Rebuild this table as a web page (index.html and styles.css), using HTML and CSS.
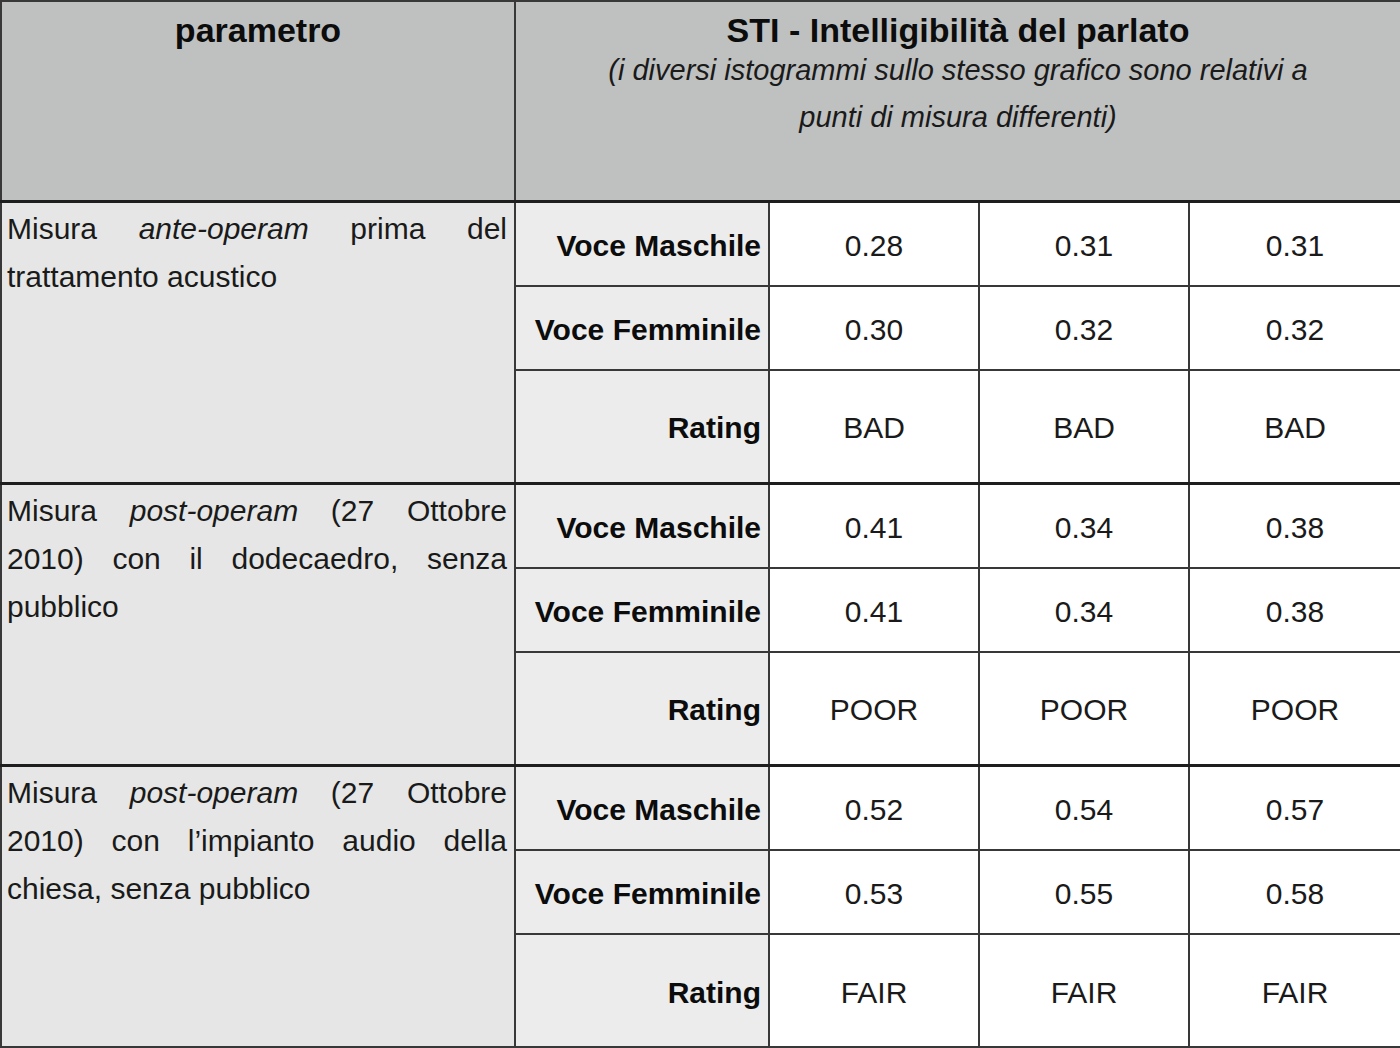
FILE: index.html
```html
<!DOCTYPE html>
<html lang="it">
<head>
<meta charset="utf-8">
<title>STI - Intelligibilità del parlato</title>
<link rel="stylesheet" href="styles.css">
</head>
<body>
<table class="sti">
  <colgroup>
    <col class="c-param">
    <col class="c-label">
    <col class="c-val">
    <col class="c-val">
    <col class="c-val-last">
  </colgroup>
  <thead>
    <tr class="head-row">
      <th class="h-param">parametro</th>
      <th class="h-sti" colspan="4">
        <div class="h-title">STI - Intelligibilità del parlato</div>
        <div class="h-sub">(i diversi istogrammi sullo stesso grafico sono relativi a<br>punti di misura differenti)</div>
      </th>
    </tr>
  </thead>
  <tbody class="group">
    <tr class="r-first">
      <td class="desc" rowspan="3">Misura <em>ante-operam</em> prima del trattamento acustico</td>
      <th class="label">Voce Maschile</th>
      <td class="val">0.28</td><td class="val">0.31</td><td class="val">0.31</td>
    </tr>
    <tr class="r-second">
      <th class="label">Voce Femminile</th>
      <td class="val">0.30</td><td class="val">0.32</td><td class="val">0.32</td>
    </tr>
    <tr class="r-rating">
      <th class="label">Rating</th>
      <td class="val">BAD</td><td class="val">BAD</td><td class="val">BAD</td>
    </tr>
  </tbody>
  <tbody class="group">
    <tr class="r-first">
      <td class="desc" rowspan="3">Misura <em>post-operam</em> (27 Ottobre 2010) con il dodecaedro, senza pubblico</td>
      <th class="label">Voce Maschile</th>
      <td class="val">0.41</td><td class="val">0.34</td><td class="val">0.38</td>
    </tr>
    <tr class="r-second">
      <th class="label">Voce Femminile</th>
      <td class="val">0.41</td><td class="val">0.34</td><td class="val">0.38</td>
    </tr>
    <tr class="r-rating">
      <th class="label">Rating</th>
      <td class="val">POOR</td><td class="val">POOR</td><td class="val">POOR</td>
    </tr>
  </tbody>
  <tbody class="group">
    <tr class="r-first">
      <td class="desc" rowspan="3">Misura <em>post-operam</em> (27 Ottobre 2010) con l’impianto audio della chiesa, senza pubblico</td>
      <th class="label">Voce Maschile</th>
      <td class="val">0.52</td><td class="val">0.54</td><td class="val">0.57</td>
    </tr>
    <tr class="r-second">
      <th class="label">Voce Femminile</th>
      <td class="val">0.53</td><td class="val">0.55</td><td class="val">0.58</td>
    </tr>
    <tr class="r-rating">
      <th class="label">Rating</th>
      <td class="val">FAIR</td><td class="val">FAIR</td><td class="val">FAIR</td>
    </tr>
  </tbody>
</table>
</body>
</html>
```

FILE: styles.css
```css
html, body {
  margin: 0;
  padding: 0;
  background: #ffffff;
}

body {
  font-family: "Liberation Sans", Arial, sans-serif;
  color: #111111;
}

.sti {
  width: 1400px;
  table-layout: fixed;
  border-collapse: collapse;
  border: 2px solid #333333;
}

.c-param { width: 514px; }
.c-label { width: 254px; }
.c-val { width: 210px; }
.c-val-last { width: 212px; }

.sti th,
.sti td {
  border: 2px solid #383838;
  padding: 0;
}

.head-row {
  height: 200px;
}

.sti .head-row th {
  background: #bfc1c0;
  vertical-align: top;
  text-align: center;
  padding-top: 11px;
  border-bottom: 3px solid #1e1e1e;
}

.h-param,
.h-title {
  font-size: 34px;
  font-weight: bold;
  line-height: 34px;
  color: #0c0c0c;
}

.h-sub {
  font-size: 29px;
  font-style: italic;
  font-weight: normal;
  line-height: 47px;
  color: #1a1a1a;
}

.sti .group {
  border-top: 3px solid #1e1e1e;
}

.r-first { height: 85px; }
.r-second { height: 84px; }
.r-rating { height: 113px; }

.sti .desc {
  background: #e5e6e5;
  vertical-align: top;
  text-align: justify;
  font-size: 30px;
  line-height: 48px;
  padding: 2px 7px 0 5px;
  color: #1a1a1a;
}

.desc em {
  font-style: italic;
}

.sti .label {
  background: #ececec;
  text-align: right;
  vertical-align: middle;
  font-size: 30px;
  font-weight: bold;
  padding: 4px 7px 0 0;
  color: #0c0c0c;
}

.sti .val {
  background: #ffffff;
  text-align: center;
  vertical-align: middle;
  font-size: 30px;
  padding-top: 4px;
  color: #1a1a1a;
}
```
